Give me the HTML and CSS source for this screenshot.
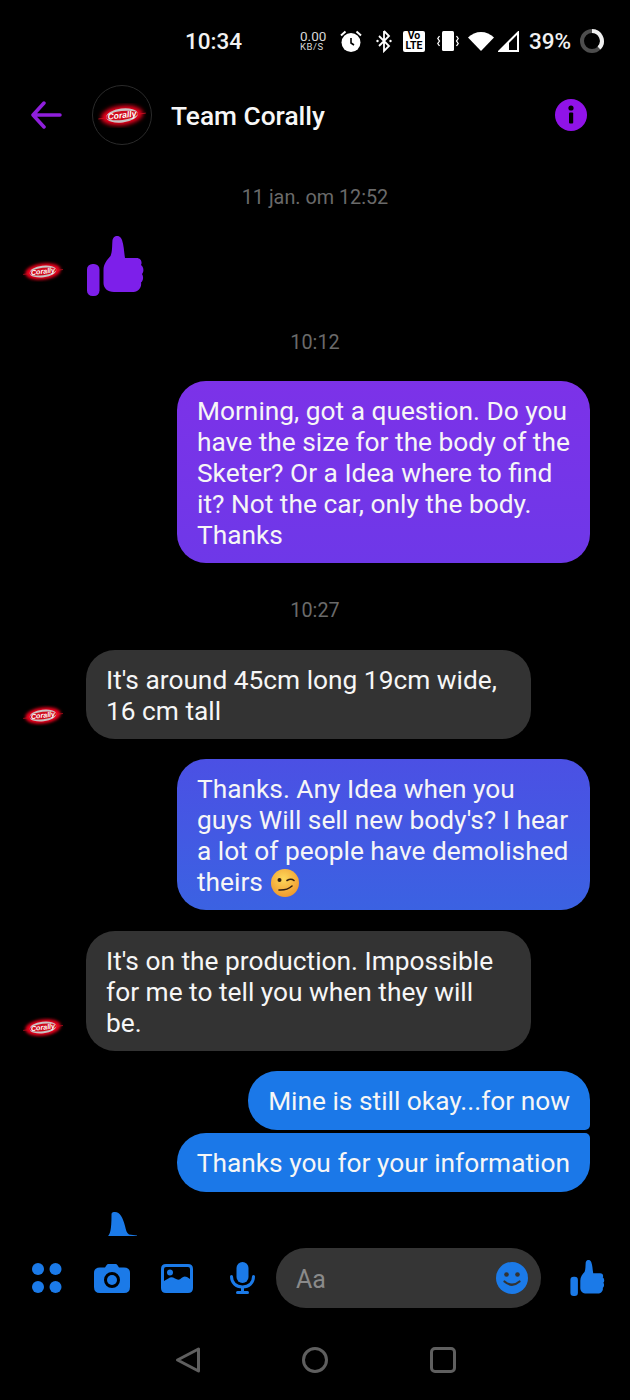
FILE: index.html
```html
<!DOCTYPE html>
<html lang="nl">
<head>
<meta charset="utf-8">
<title>Team Corally</title>
<link rel="stylesheet" href="styles.css">
</head>
<body>
<svg class="defs" width="0" height="0" aria-hidden="true">
  <defs>
    <filter id="glow" x="-30%" y="-60%" width="160%" height="220%"><feGaussianBlur stdDeviation="1.800"/></filter>
    <symbol id="thumb" viewBox="87 236 57 60">
      <rect x="87" y="264" width="12.500" height="32" rx="5.500"/>
      <path d="M103.500 270C103.500 264 107 260 110.500 256C112.500 252 112 245 112.500 240C114 234.500 120 234.500 122 240C124 246 124 252 125 258L136.500 258C141 258 142.500 262 141 265C144 267 144 272 142 274C144 277 143 281 141 282.500C142 287 138.500 292 133.500 292L114 292C107.500 292 103.500 288 103.500 283Z"/>
    </symbol>
    <symbol id="logo" viewBox="0 0 44 22">
      <g transform="rotate(-7 22 11)">
        <ellipse cx="22" cy="11" rx="18.500" ry="8.500" fill="#f0001a" filter="url(#glow)"/>
        <path d="M1 11.500H43" stroke="#d01020" stroke-width=".7"/>
        <ellipse cx="22" cy="11" rx="14" ry="6.200" fill="#c9c4c4"/>
        <ellipse cx="22" cy="11" rx="14" ry="3.900" fill="#d00c1c"/>
        <text x="22" y="13.300" class="logo-text">Corally</text>
      </g>
    </symbol>
  </defs>
</svg>

<main class="screen">
  <div class="status">
    <span class="clock">10:34</span>
    <span class="speed"><b>0.00</b><i>KB/S</i></span>
    <svg class="st-alarm" viewBox="0 0 24 24"><path d="M2 6.500L6.500 2.500M22 6.500L17.500 2.500" class="st-line"/><circle cx="12" cy="13.500" r="9.500" fill="#fff"/><path d="M12 9v5l3 2" fill="none" stroke="#000" stroke-width="1.600"/></svg>
    <svg class="st-bt" viewBox="0 0 16 24"><path d="M8 2v20l5-5-10-10M8 2l5 5-10 10" fill="none" stroke="#fff" stroke-width="1.800"/><circle cx="1.500" cy="12" r="1.200" fill="#fff"/><circle cx="14.500" cy="12" r="1.200" fill="#fff"/></svg>
    <span class="volte"><span>Vo</span><span>LTE</span></span>
    <svg class="st-vib" viewBox="0 0 22 24"><rect x="5" y="2" width="12" height="20" rx="1.500" fill="#fff"/><path d="M2.500 7L.8 9.500l1.700 2.500-1.700 2.500 1.700 2.500M19.500 7l1.700 2.500-1.700 2.500 1.700 2.500-1.700 2.500" fill="none" stroke="#fff" stroke-width="1.300"/></svg>
    <svg class="st-wifi" viewBox="0 0 26 20"><path d="M0 6.500C7-1 19-1 26 6.500L13 20Z" fill="#fff"/></svg>
    <svg class="st-sig" viewBox="0 0 21 21"><path d="M1.500 20L20 1.500V20Z" fill="none" stroke="#fff" stroke-width="2"/><path d="M1 20L11 10V20Z" fill="#fff"/></svg>
    <span class="battery">39%</span>
    <svg class="st-ring" viewBox="0 0 26 26"><circle cx="13" cy="13" r="10" fill="none" stroke="#4d4d4d" stroke-width="4"/><path d="M13 3A10 10 0 0 1 20 20" fill="none" stroke="#f0f0f0" stroke-width="4"/></svg>
  </div>

  <header class="topbar">
    <svg class="back" viewBox="0 0 32 28"><path d="M30 14H4M14 2L3 14l11 12" fill="none" stroke="#8f1fdc" stroke-width="3.500" stroke-linecap="round" stroke-linejoin="round"/></svg>
    <span class="avatar"><svg class="avatar-logo"><use href="#logo"/></svg></span>
    <h1 class="name">Team Corally</h1>
    <svg class="info" viewBox="0 0 32 32"><circle cx="16" cy="16" r="16" fill="#9013e8"/><circle cx="16" cy="9" r="2.600" fill="#000"/><rect x="14" y="13.500" width="4.200" height="11" rx="1" fill="#000"/></svg>
  </header>

  <section class="thread">
    <p class="stamp stamp-first">11 jan. om 12:52</p>
    <div class="row row-like">
      <svg class="mini"><use href="#logo"/></svg>
      <svg class="like-big"><use href="#thumb"/></svg>
    </div>
    <p class="stamp">10:12</p>
    <div class="bubble out grad-a">Morning, got a question. Do you have the size for the body of the Sketer? Or a Idea where to find it? Not the car, only the body. Thanks</div>
    <p class="stamp stamp-wide">10:27</p>
    <div class="row row-in">
      <svg class="mini"><use href="#logo"/></svg>
      <div class="bubble in">It's around 45cm long 19cm wide, 16 cm tall</div>
    </div>
    <div class="bubble out grad-b next">Thanks. Any Idea when you guys Will sell new body's? I hear a lot of people have demolished theirs <svg class="wink" viewBox="0 0 28 28"><defs><radialGradient id="wk" cx=".45" cy=".35" r=".75"><stop offset="0" stop-color="#fdd85a"/><stop offset="1" stop-color="#ee9128"/></radialGradient></defs><circle cx="14" cy="14" r="14" fill="url(#wk)"/><circle cx="8.500" cy="11" r="2" fill="#332013"/><path d="M16 11.500q4-2.500 7 0M8 21q8 .5 13-4" fill="none" stroke="#332013" stroke-width="1.600" stroke-linecap="round"/></svg></div>
    <div class="row row-in row-next">
      <svg class="mini"><use href="#logo"/></svg>
      <div class="bubble in">It's on the production. Impossible for me to tell you when they will be.</div>
    </div>
    <div class="bubble out solo grad-c next tail-b">Mine is still okay...for now</div>
    <div class="bubble out solo grad-c next-tight tail-t">Thanks you for your information</div>
    <svg class="fin" viewBox="0 0 30 24"><path d="M1 24C3 22 4.500 18 4.500 3C4.500 0 6 0 8 0C13 0 16 6 18 14C19 18 19.500 21 22 22.500L30 23.500V24Z" fill="#1b7ae8"/></svg>
  </section>

  <div class="composer">
    <svg class="c-dots" viewBox="0 0 30 30"><circle cx="6" cy="6" r="6"/><circle cx="23.500" cy="6" r="6"/><circle cx="6" cy="24" r="6"/><circle cx="23.500" cy="24" r="6"/></svg>
    <svg class="c-cam" viewBox="0 0 36 29"><path fill-rule="evenodd" d="M11 3.500L12.500 1.200Q13.200 0 14.500 0H21.500Q22.800 0 23.500 1.200L25 3.500H30Q36 3.500 36 9V23Q36 29 30 29H6Q0 29 0 23V9Q0 3.500 6 3.500ZM18 8A8 8 0 1 0 18 24A8 8 0 1 0 18 8Z"/><circle cx="18" cy="16" r="5"/></svg>
    <svg class="c-img" viewBox="0 0 32 29"><path fill-rule="evenodd" d="M5 0H27Q32 0 32 5V24Q32 29 27 29H5Q0 29 0 24V5Q0 0 5 0ZM5 3Q3 3 3 5V17L9 13.500Q11 12.500 14 14.500Q18 17 20.500 14Q23 11.500 26 13L29 15V5Q29 3 27 3ZM9 5.500A3 3 0 1 0 9 11.500A3 3 0 1 0 9 5.500Z"/></svg>
    <svg class="c-mic" viewBox="0 0 25 32"><rect x="6.500" y="0" width="12" height="21" rx="6"/><path d="M1.500 14.500C1.500 21 6 25 12.500 25S23.500 21 23.500 14.500" fill="none" stroke-width="3" stroke-linecap="round" class="c-stroke"/><rect x="11" y="25" width="3" height="5"/><rect x="6" y="29" width="13" height="3" rx="1.500"/></svg>
    <div class="input">
      <span class="placeholder">Aa</span>
      <svg class="c-smile" viewBox="0 0 32 32"><circle cx="16" cy="16" r="16"/><circle cx="10.500" cy="12.500" r="2.300" fill="#333"/><circle cx="21.500" cy="12.500" r="2.300" fill="#333"/><path d="M8.500 19.500Q16 26 23.500 19.500" fill="none" stroke="#333" stroke-width="2.200" stroke-linecap="round"/></svg>
    </div>
    <svg class="c-like"><use href="#thumb"/></svg>
  </div>

  <nav class="navbar">
    <svg class="nav-icon" viewBox="0 0 28 28"><path d="M4.500 14L25.500 3V25Z" class="nav-stroke"/></svg>
    <svg class="nav-icon" viewBox="0 0 28 28"><circle cx="14" cy="14" r="11.500" class="nav-stroke"/></svg>
    <svg class="nav-icon" viewBox="0 0 28 28"><rect x="2.500" y="2.500" width="23" height="23" rx="3.500" class="nav-stroke"/></svg>
  </nav>
</main>
</body>
</html>
```

FILE: styles.css
```css
* { box-sizing: border-box; }
html, body { margin: 0; background: #000; }
body { font-family: Roboto, "Noto Sans", sans-serif; color: #fff; }
.defs { position: absolute; }
.screen { width: 630px; height: 1400px; overflow: hidden; display: flex; flex-direction: column; }

/* status bar */
.status { height: 82px; padding-left: 185px; display: flex; align-items: center; }
.clock { font-size: 22.500px; font-weight: 500; width: 115px; color: #f2f2f2; }
.speed { width: 39px; display: flex; flex-direction: column; font-size: 13.500px; line-height: 12px; color: #d8d8d8; }
.speed b { font-weight: 400; }
.speed i { font-style: normal; font-size: 9.500px; letter-spacing: .6px; line-height: 10px; }
.status svg { display: block; flex: none; }
.st-alarm { width: 24px; height: 24px; margin-right: 13px; }
.st-line { stroke: #fff; stroke-width: 2; fill: none; }
.st-bt { width: 16px; height: 24px; margin-right: 11px; }
.volte { width: 22px; height: 21px; background: #fff; color: #000; border-radius: 2px; display: flex; flex-direction: column; align-items: center; font-size: 10.500px; line-height: 10px; font-weight: 700; margin-right: 12px; }
.st-vib { width: 22px; height: 24px; margin-right: 9px; }
.st-wifi { width: 26px; height: 20px; margin-right: 4px; }
.st-sig { width: 21px; height: 21px; margin-right: 10px; }
.battery { font-size: 22.500px; font-weight: 500; width: 50px; color: #f2f2f2; }
.st-ring { width: 26px; height: 26px; }

/* header */
.topbar { height: 66px; padding-left: 30px; display: flex; align-items: center; }
.back { width: 32px; height: 28px; margin-right: 30px; }
.avatar { width: 60px; height: 60px; border-radius: 50%; border: 1px solid #2a2a2a; display: flex; align-items: center; justify-content: center; margin-right: 19px; }
.avatar-logo { width: 50px; height: 25px; }
.name { margin: 0; padding-top: 2px; font-size: 26.300px; font-weight: 500; color: #f7f7f7; flex: 1; }
.info { width: 32px; height: 32px; margin-right: 43px; }

.logo-text { font-family: "Liberation Sans", sans-serif; font-size: 7.500px; font-weight: 700; font-style: italic; text-anchor: middle; fill: #fff; }

/* thread */
.thread { height: 1100px; display: flex; flex-direction: column; }
.stamp { margin: 35px 0 26px; height: 24px; line-height: 24px; text-align: center; font-size: 19.800px; color: #6a6a6a; }
.stamp-first { margin: 38px 0 26px; }
.stamp-wide { margin: 36px 0 27px; }
.row { display: flex; }
.row-like { height: 60px; padding-left: 22px; align-items: center; }
.row-in { padding-left: 22px; align-items: flex-end; }
.row-next { margin-top: 21px; }
.mini { width: 42px; height: 21px; flex: none; margin-bottom: 13px; }
.row-like .mini { margin: 10px 0 0; }
.like-big { width: 57px; height: 60px; margin-left: 23px; fill: #7d1fea; }

.bubble { font-size: 26.300px; line-height: 31px; padding: 15px 20px 12px; color: #f6f6f6; border-radius: 29px; }
.out { align-self: flex-end; width: 413px; margin-right: 40px; }
.in { width: 445px; margin-left: 22px; background: #333; }
.solo { width: auto; white-space: nowrap; padding-bottom: 13px; }
.grad-a { background: linear-gradient(#7c32e8, #6e38e8); }
.grad-b { background: linear-gradient(#4b50e4, #3b62e2); }
.grad-c { background: #1b78e8; }
.next { margin-top: 20px; }
.next-tight { margin-top: 3px; }
.tail-b { border-bottom-right-radius: 5px; }
.tail-t { border-top-right-radius: 5px; }
.wink { width: 28px; height: 28px; vertical-align: -6px; margin-left: 2px; }
.fin { width: 30px; height: 24px; margin: 20px 0 0 107px; flex: none; }

/* composer */
.composer { height: 60px; display: flex; align-items: center; padding-left: 32px; fill: #1b7ae8; }
.composer svg { flex: none; display: block; }
.c-stroke { stroke: #1b7ae8; }
.c-dots { width: 30px; height: 30px; margin-right: 32px; }
.c-cam { width: 36px; height: 29px; margin-right: 31px; }
.c-img { width: 32px; height: 29px; margin-right: 37px; }
.c-mic { width: 25px; height: 32px; margin-right: 21px; }
.input { width: 265px; height: 60px; border-radius: 30px; background: #353535; display: flex; align-items: center; justify-content: space-between; padding: 0 13px 0 20px; margin-right: 29px; }
.placeholder { font-size: 25px; color: #8a8a8a; padding-top: 3px; }
.c-smile { width: 32px; height: 32px; }
.c-like { width: 35px; height: 36px; }

/* nav bar */
.navbar { margin-top: 38px; padding-left: 173px; display: flex; gap: 100px; }
.nav-icon { width: 28px; height: 28px; display: block; }
.nav-stroke { fill: none; stroke: #5f5f5f; stroke-width: 3; stroke-linejoin: round; }
```
